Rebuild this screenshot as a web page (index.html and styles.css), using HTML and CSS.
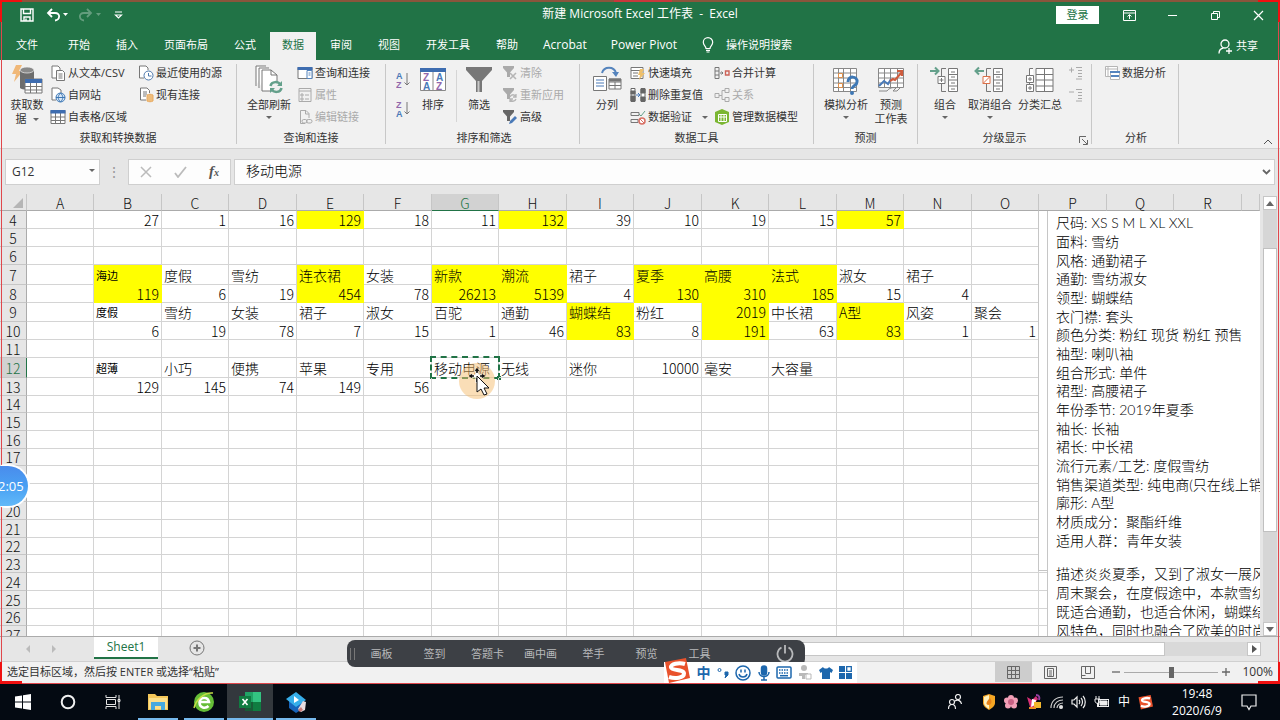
FILE: index.html
```html
<!DOCTYPE html>
<html lang="zh-CN">
<head>
<meta charset="utf-8">
<title>新建 Microsoft Excel 工作表 - Excel</title>
<link rel="stylesheet" href="styles.css">
</head>
<body>
<div class="app">
  <header class="titlebar">
    <div class="quick">
      <button aria-label="保存"><svg width="14" height="14" viewBox="0 0 14 14" fill="none" stroke="#fff" stroke-width="1.4"><path d="M1 1h12v12H1zM3.500 1v4.500h7V1M4 13V9h6v4M6 10.500v2"/></svg></button>
      <button aria-label="撤消"><svg width="24" height="14" viewBox="0 0 24 14" fill="none" stroke="#fff" stroke-width="1.800"><path d="M6 1L2 5l4 4M2 5h7c6 0 5 7 0 7.500"/><path d="M17 5h5l-2.500 3z" fill="#fff" stroke="none"/></svg></button>
      <button aria-label="恢复" class="faded"><svg width="24" height="14" viewBox="0 0 24 14" fill="none" stroke="#fff" stroke-width="1.800"><path d="M9 1l4 4-4 4M13 5H6C0 5 1 12 6 12.500"/><path d="M18 5h5l-2.500 3z" fill="#fff" stroke="none"/></svg></button>
      <button aria-label="自定义快速访问工具栏"><svg width="9" height="10" viewBox="0 0 9 10" fill="none" stroke="#fff" stroke-width="1.200"><path d="M1 2h7M1.500 5l3 3 3-3z"/></svg></button>
    </div>
    <div class="doc-title">新建 Microsoft Excel 工作表&nbsp; -&nbsp; Excel</div>
    <div class="window-tools">
      <button class="login">登录</button>
      <button aria-label="功能区显示选项"><svg width="13" height="11" viewBox="0 0 13 11" fill="none" stroke="#fff"><path d="M.5.500h12v10H.500zM.500 3h12M6.500 9V5M4.500 6.500l2-2 2 2"/></svg></button>
      <button aria-label="最小化"><svg width="11" height="11" viewBox="0 0 11 11" stroke="#fff"><path d="M1 5.500h9"/></svg></button>
      <button aria-label="还原"><svg width="11" height="11" viewBox="0 0 11 11" fill="none" stroke="#fff"><path d="M1.500 3.500h6v6h-6zM3.500 3.500v-2h6v6h-2"/></svg></button>
      <button aria-label="关闭"><svg width="11" height="11" viewBox="0 0 11 11" stroke="#fff" stroke-width="1.200"><path d="M1 1l9 9M10 1l-9 9"/></svg></button>
    </div>
  </header>

  <nav class="tabs">
    <button class="file">文件</button><button>开始</button><button>插入</button><button>页面布局</button><button>公式</button><button class="active">数据</button><button>审阅</button><button>视图</button><button>开发工具</button><button>帮助</button><button class="latin">Acrobat</button><button class="latin">Power Pivot</button>
    <button class="tell"><svg width="12" height="16" viewBox="0 0 12 16" fill="none" stroke="#fff" stroke-width="1.200"><path d="M4 11.500C4 9 1.300 8.500 1.300 5.300a4.700 4.700 0 019.400 0C10.700 8.500 8 9 8 11.500zM4 13.300h4M4.500 15h3"/></svg>操作说明搜索</button>
    <button class="share"><svg width="14" height="15" viewBox="0 0 14 15" fill="none" stroke="#fff" stroke-width="1.300"><circle cx="7" cy="5" r="4"/><path d="M1 14.500c0-3 2-5 4.500-5.500M11 9v6M8 12h6"/></svg>共享</button>
  </nav>

  <section class="ribbon">
    <div class="group g-get">
      <div class="tools">
        <button class="large"><svg width="32" height="32" viewBox="0 0 32 32"><path d="M5 1h6L8 7h4L3 18l2-8H1z" fill="#f0b878"/><path d="M9 6v18c2 2 11 2 14 0V6z" fill="#6d6d6d"/><ellipse cx="16" cy="6" rx="7" ry="3" fill="#8a8a8a" stroke="#f1f1f1" stroke-width=".7"/><path d="M14 15h17v14H14z" fill="#fff" stroke="#777"/><path d="M14 15h17v4H14z" fill="#3e6db0"/><path d="M14 22.500h17M14 26h17M19.500 19v10M25.500 19v10" stroke="#777" fill="none"/></svg><span>获取数<br>据<i class="down"></i></span></button>
        <div class="stack first">
          <button><svg viewBox="0 0 16 16" fill="#fff" stroke="#777"><path d="M10 5V3L8 1H2v12h4M6.500 5.500h6l2 2v8h-8zM8.500 9h4M8.500 11h4M8.500 13h4"/></svg>从文本/CSV</button>
          <button><svg viewBox="0 0 16 16" fill="#fff" stroke="#777"><path d="M11 6V3L8 1H2v12h4"/><circle cx="10.500" cy="10.500" r="4.500" fill="#d9e8f7" stroke="#3e78b5"/><path d="M10.500 6c-3 3-3 6 0 9 3-3 3-6 0-9M6 10.500h9" fill="none" stroke="#3e78b5"/></svg>自网站</button>
          <button><svg viewBox="0 0 16 16" fill="none" stroke="#777"><path d="M1 1.500h14v13H1zM1 8h14M1 11.500h14M5.500 4v10M10.500 4v10" fill="#fff"/><path d="M.500 1h15v3.500H.500z" fill="#3e6db0" stroke="none"/></svg>自表格/区域</button>
        </div>
        <div class="stack">
          <button><svg viewBox="0 0 16 16" fill="#fff" stroke="#777"><path d="M10 5V3L8 1H1.500v12H6"/><circle cx="10.500" cy="10.500" r="4.500" stroke="#4c78ad"/><path d="M10.500 8v3h3" fill="none" stroke="#4c78ad"/></svg>最近使用的源</button>
          <button><svg viewBox="0 0 16 16" fill="#fff" stroke="#777"><path d="M11.500 6V3.500L9 1H2.500v12H8M5 5h4M5 7h4M5 9h3"/><path d="M9 8c2-1 4-1 6 0v6c-2 1-4 1-6 0z" fill="#efbd7c" stroke="#e8ab62"/></svg>现有连接</button>
        </div>
      </div>
      <h2>获取和转换数据</h2>
    </div>
    <div class="group g-query">
      <div class="tools">
        <button class="large w50"><svg width="32" height="32" viewBox="0 0 32 32" fill="#fff" stroke="#777"><path d="M3 22V2h10M6 24V4h10M9 27V6h9l6 5v16z"/><path d="M18 6v5h6" fill="none"/><circle cx="23" cy="23" r="6" fill="#f1f1f1" stroke="none"/><g fill="none" stroke="#64a08b" stroke-width="2.500"><path d="M17.500 22c1-5 8-5 10-1M28.500 24c-1 5-8 5-10 1"/></g><path d="M29 17v5h-5zM17 29v-5h5z" fill="#64a08b" stroke="none"/></svg><span>全部刷新<br><i class="down below"></i></span></button>
        <div class="stack">
          <button><svg viewBox="0 0 16 16" fill="#fff" stroke="#777"><path d="M1 2.500h14v11H1z"/><path d="M.500 2h15v3H.500z" fill="#3e6db0" stroke="none"/><path d="M10 5.500h5v8h-5zM11.500 8h2M11.500 10h2" stroke="#5584bd"/></svg>查询和连接</button>
          <button disabled><svg viewBox="0 0 16 16" fill="none" stroke="#aaa"><path d="M2 1.500h12v13H2zM2 4h12M4 7h2v2H4zM4 11h2v2H4zM8 8h4M8 12h4"/></svg>属性</button>
          <button disabled><svg viewBox="0 0 16 16" fill="none" stroke="#aaa"><path d="M8 14.500H3.500v-13H9l3 3V9M8.500 1.500V5H12"/><rect x="5" y="10.500" width="5" height="3.500" rx="1.700"/><rect x="9.500" y="10.500" width="5.500" height="3.500" rx="1.700"/></svg>编辑链接</button>
        </div>
      </div>
      <h2>查询和连接</h2>
    </div>
    <div class="group g-sort">
      <div class="tools">
        <div class="sorts">
          <button aria-label="升序"><svg width="14" height="18" viewBox="0 0 14 18"><text x="0" y="8" class="az blue">A</text><text x="0" y="17" class="az violet">Z</text><path d="M11 2v12M8.500 11.500L11 14l2.500-2.500" fill="none" stroke="#777"/></svg></button>
          <button aria-label="降序"><svg width="14" height="18" viewBox="0 0 14 18"><text x="0" y="8" class="az violet">Z</text><text x="0" y="17" class="az blue">A</text><path d="M11 2v12M8.500 11.500L11 14l2.500-2.500" fill="none" stroke="#777"/></svg></button>
        </div>
        <button class="large w44"><svg width="32" height="32" viewBox="0 0 32 32"><path d="M3.500 4.500h25v22h-25zM16 5v22" fill="#fff" stroke="#888"/><path d="M3 4h26v4H3z" fill="#3e6db0"/><text x="6" y="17" class="azl violet">Z</text><text x="6" y="26" class="azl blue">A</text><text x="19" y="17" class="azl blue">A</text><text x="19" y="26" class="azl violet">Z</text></svg><span>排序</span></button>
        <i class="rule"></i>
        <button class="large w44"><svg width="32" height="32" viewBox="0 0 32 32"><path d="M3 3h26v3L19 17v11h-6V17L3 6z" fill="#777"/><path d="M15.500 17v11" stroke="#c8c8c8" stroke-width="2"/></svg><span>筛选</span></button>
        <div class="stack">
          <button disabled><svg viewBox="0 0 16 16"><path d="M1 1h11v2L8 7.500V12H5V7.500L1 3z" fill="#aaa"/><path d="M8 8l6 6M14 8l-6 6" stroke="#b5b5b5" stroke-width="1.600"/></svg>清除</button>
          <button disabled><svg viewBox="0 0 16 16"><path d="M1 1h11v2L8 7.500V12H5V7.500L1 3z" fill="#aaa"/><path d="M8 10c1-3 5-3 6 0M14 12c-1 3-5 3-6 0M14 7v3h-3M8 15v-3h3" fill="none" stroke="#b5b5b5" stroke-width="1.300"/></svg>重新应用</button>
          <button><svg viewBox="0 0 16 16"><path d="M1 1h11v2L8 7.500V12H5V7.500L1 3z" fill="#666"/><path d="M7 15l1-3 5-5 2 2-5 5z" fill="#4a7ab8"/></svg>高级</button>
        </div>
      </div>
      <h2>排序和筛选</h2>
    </div>
    <div class="group g-data">
      <div class="tools">
        <button class="large"><svg width="32" height="32" viewBox="0 0 32 32" fill="#fff"><path d="M2.500 12.500h13v14h-13z" stroke="#777"/><path d="M5 16h8M5 19h8M5 22h8" stroke="#4a7ab8"/><path d="M18 15h12v10H18zM18 18h12M24 18v7M18 21.500h12" stroke="#777"/><path d="M18 14.500h12v3H18z" fill="#777"/><path d="M11 9c2-7 12-7 14 0" fill="none" stroke="#5584bd" stroke-width="2"/><path d="M21 8h7l-3 5z" fill="#5584bd"/></svg><span>分列</span></button>
        <div class="stack wide">
          <button><svg viewBox="0 0 16 16" fill="#fff" stroke="#777"><path d="M1 2.500h12v11H1zM1 5.500h12M3 8h5M3 11h5"/><path d="M10 4h4l-2 4h3l-6 7 1-5H8z" fill="#eec06c" stroke="none"/></svg>快速填充</button>
          <button><svg viewBox="0 0 16 16" fill="none" stroke="#666"><path d="M1 1.500h4v13H1zM11 1.500h4v13h-4z" fill="#fff"/><path d="M1 4h4v3H1zM1 9h4v5H1zM11 2h4v4h-4zM11 10h4v4h-4z" fill="#666"/><path d="M6 8h4M8 6l2 2-2 2" stroke="#4a7ab8"/></svg>删除重复值</button>
          <button><svg viewBox="0 0 16 16" fill="none" stroke="#777"><path d="M1 3.500h8v3H1zM1 10.500h7v3H1z"/><path d="M9 5l2 2 4-5" stroke="#64a08b"/><circle cx="12" cy="12" r="3" fill="#fff" stroke="#d87065" stroke-width="1.500"/><path d="M10 10l4 4" stroke="#d87065"/></svg>数据验证<i class="down aside"></i></button>
        </div>
        <div class="stack">
          <button><svg viewBox="0 0 16 16" fill="none" stroke="#777"><path d="M1 2.500h4v11H1zM1 6h4M1 10h4M6 8h3M7.500 6.500L9 8 7.500 9.500"/><path d="M11.500 6h3.500v4h-3.500z" stroke="#cc6257" stroke-width="1.400"/></svg>合并计算</button>
          <button disabled><svg viewBox="0 0 16 16" fill="none" stroke="#aaa"><path d="M1 6.500h4v4H1zM11 1.500h4v4h-4zM11 10.500h4v4h-4zM5 8.500h3v-5h3M8 8.500v4h3"/></svg>关系</button>
          <button><svg viewBox="0 0 16 16"><path d="M1 3l7-3 7 3v10l-7 3-7-3z" fill="#7bb632"/><path d="M4.500 5.500h8v7h-8zM4.500 8h8M7 5.500v7M10 5.500v7" stroke="#fff" fill="none"/></svg>管理数据模型</button>
        </div>
      </div>
      <h2>数据工具</h2>
    </div>
    <div class="group g-forecast">
      <div class="tools">
        <button class="large w50"><svg width="32" height="32" viewBox="0 0 32 32" fill="none" stroke="#888"><path d="M3.500 4.500h23v23h-23zM3.500 9h23M3.500 14h23M3.500 19h23M3.500 23.500h23M8.500 5v22M13.500 5v22M20.500 5v22" fill="#fff"/><path d="M8.500 9.500h4v4h-4zM8.500 19.500h4v4h-4z" stroke="#e0914a"/><path d="M18 18c0-7 10-6 9 0 0 4-5 3-5 7" stroke="#3e78b5" stroke-width="3"/><circle cx="22" cy="29" r="2" fill="#3e78b5" stroke="none"/></svg><span>模拟分析<br><i class="down below"></i></span></button>
        <button class="large"><svg width="32" height="32" viewBox="0 0 32 32" fill="none" stroke="#888"><path d="M3.500 4.500h25v19h-25zM3.500 9h25M3.500 14h25M3.500 19h25M9.500 5v18M15.500 5v18M22.500 5v18" fill="#fff"/><path d="M4 27h8c2-3 6-4 9-3l-3 3h4l3-3"/><path d="M4 22l5-5 4 3 3-5" stroke="#4a7ab8" stroke-width="2"/><path d="M15 17l3-2 2 1 7-8M22 7h5v5" stroke="#cf5b3d" stroke-width="2.200"/></svg><span>预测<br>工作表</span></button>
      </div>
      <h2>预测</h2>
    </div>
    <div class="group g-outline">
      <div class="tools">
        <button class="large"><svg width="32" height="32" viewBox="0 0 32 32" fill="none" stroke="#777"><path d="M19.500 4.500h9v23h-9zM19.500 10.500h9M19.500 16h9M19.500 22h9M22 8h4M22 13h4M22 19h4M22 25h4" fill="#fff"/><path d="M17 4.500h-4.500v23H17"/><path d="M9 12.500h7v7H9zM10.500 16h4M12.500 14v4" fill="#fff"/><path d="M1 7h8M6 3.500L9.500 7 6 10.500" stroke="#64a08b" stroke-width="2"/></svg><span>组合<br><i class="down below"></i></span></button>
        <button class="large w50"><svg width="32" height="32" viewBox="0 0 32 32" fill="none" stroke="#777"><path d="M19.500 4.500h9v23h-9zM19.500 10.500h9M19.500 16h9M19.500 22h9M22 8h4M22 13h4M22 19h4M22 25h4" fill="#fff"/><path d="M17 4.500h-4.500v23H17"/><path d="M9 12.500h7v7H9zM9 19.500l7-7" fill="#fff" stroke="#dc7049"/><path d="M2 7h8M5 3.500L1.500 7 5 10.500" stroke="#64a08b" stroke-width="2"/></svg><span>取消组合<br><i class="down below"></i></span></button>
        <button class="large w50"><svg width="32" height="32" viewBox="0 0 32 32" fill="none" stroke="#777"><path d="M9 4.500H5.500v22H9M12 4.500h17v23H12zM12 10.500h17M12 16h17M12 22h17M20.500 4.500v23" fill="#fff"/><path d="M2.500 11.500h7v7h-7zM2.500 20.500h7v7h-7zM4 15h4M6 13v4M4 24h4M6 22v4" fill="#fff"/></svg><span>分类汇总</span></button>
        <div class="stack">
          <button disabled aria-label="显示明细数据"><svg viewBox="0 0 16 16" fill="none" stroke="#aaa"><path d="M1 5h5M3.500 2.500v5M8 2.500h6M10 5.500h4M10 8.500h4M10 11.500h4M8 14h6"/></svg></button>
          <button disabled aria-label="隐藏明细数据"><svg viewBox="0 0 16 16" fill="none" stroke="#aaa"><path d="M1 5h5M8 2.500h6M10 5.500h4M10 8.500h4M10 11.500h4M8 14h6"/></svg></button>
        </div>
      </div>
      <h2>分级显示</h2>
      <button class="launcher" aria-label="分级显示设置"><svg width="9" height="9" viewBox="0 0 9 9" fill="none" stroke="#666"><path d="M.500 7V.500H7M3 3l5 5M8.500 4v4.500H4"/></svg></button>
    </div>
    <div class="group g-analysis">
      <div class="tools">
        <div class="stack">
          <button><svg viewBox="0 0 16 16" fill="#fff" stroke="#b5b5b5"><path d="M1.500 1.500h12v10h-12zM1.500 4h12M4 2v9"/><path d="M6.500 6.500h9v8h-9z"/><path d="M6 6h10v2H6zM7 10h8v2H7z" fill="#5584bd" stroke="none"/></svg>数据分析</button>
        </div>
      </div>
      <h2>分析</h2>
    </div>
    <button class="collapse" aria-label="折叠功能区"><svg width="10" height="6" viewBox="0 0 10 6" fill="none" stroke="#555"><path d="M1 5l4-4 4 4"/></svg></button>
  </section>

  <section class="formula">
    <label class="namebox"><input value="G12" aria-label="名称框"><i class="down"></i></label>
    <span class="dots">⋮</span>
    <div class="fx">
      <button aria-label="取消"><svg width="12" height="12" viewBox="0 0 12 12" stroke="#bbb" stroke-width="1.500"><path d="M1 1l10 10M11 1L1 11"/></svg></button>
      <button aria-label="输入"><svg width="13" height="12" viewBox="0 0 13 12" fill="none" stroke="#bbb" stroke-width="1.800"><path d="M1 7l3 4 8-10"/></svg></button>
      <button aria-label="插入函数" class="fn"><em>f<sub>x</sub></em></button>
    </div>
    <label class="entry"><input value="移动电源" aria-label="编辑栏"><svg width="9" height="6" viewBox="0 0 9 6" fill="none" stroke="#666" stroke-width="1.800"><path d="M1 1l3.500 3.500L8 1"/></svg></label>
  </section>

  <main class="sheet">
    <div class="grid-area">
      <table class="grid" id="grid"></table>
      <div class="note-back"></div>
      <article class="note">
        <div class="specs"><p>尺码: XS S M L XL XXL</p><p>面料: 雪纺</p><p>风格: 通勤裙子</p><p>通勤: 雪纺淑女</p><p>领型: 蝴蝶结</p><p>衣门襟: 套头</p><p>颜色分类: 粉红 现货 粉红 预售</p><p>袖型: 喇叭袖</p><p>组合形式: 单件</p><p>裙型: 高腰裙子</p><p>年份季节: 2019年夏季</p><p>袖长: 长袖</p><p>裙长: 中长裙</p><p>流行元素/工艺: 度假雪纺</p><p>销售渠道类型: 纯电商(只在线上销</p><p>廓形: A型</p><p>材质成分：聚酯纤维</p><p>适用人群：青年女装</p></div>
        <div class="story"><p>描述炎炎夏季，又到了淑女一展风</p><p>周末聚会，在度假途中，本款雪纺</p><p>既适合通勤，也适合休闲，蝴蝶结</p><p>风特色，同时也融合了欧美的时尚</p></div>
      </article>
    </div>
    <div class="vscroll">
      <button aria-label="向上滚动"><svg width="8" height="5" viewBox="0 0 8 5" fill="#666"><path d="M0 5l4-5 4 5z"/></svg></button>
      <div class="vtrack"><div class="vthumb"></div></div>
      <button aria-label="向下滚动"><svg width="8" height="5" viewBox="0 0 8 5" fill="#666"><path d="M0 0l4 5 4-5z"/></svg></button>
    </div>
  </main>

  <section class="sheet-tabs">
    <div class="nav"><button aria-label="上一张工作表"><svg width="4" height="8" viewBox="0 0 4 8" fill="#bbb"><path d="M4 0v8L0 4z"/></svg></button><button aria-label="下一张工作表"><svg width="4" height="8" viewBox="0 0 4 8" fill="#bbb"><path d="M0 0v8l4-4z"/></svg></button></div>
    <button class="current">Sheet1</button>
    <button class="add" aria-label="新工作表"><svg width="16" height="16" viewBox="0 0 16 16" fill="none" stroke="#777"><circle cx="8" cy="8" r="7"/><path d="M4.500 8h7M8 4.500v7" stroke-width="2"/></svg></button>
    <div class="hscroll"><div class="hthumb"></div><button aria-label="向右滚动"><svg width="5" height="8" viewBox="0 0 5 8" fill="#555"><path d="M0 0v8l5-4z"/></svg></button></div>
  </section>

  <footer class="status">
    <span class="message">选定目标区域，然后按 ENTER 或选择“粘贴”</span>
    <button class="view on" aria-label="普通"><svg width="13" height="13" viewBox="0 0 13 13" fill="none" stroke="#666"><path d="M.500.500h12v12H.500zM.500 4.500h12M.500 8.500h12M4.500.500v12M8.500.500v12"/></svg></button>
    <button class="view" aria-label="页面布局"><svg width="13" height="13" viewBox="0 0 13 13" fill="none" stroke="#666"><path d="M.500.500h12v12H.500zM3.500 2.500h6v8h-6zM5 5h3M5 7h3M5 9h3"/></svg></button>
    <button class="view" aria-label="分页预览"><svg width="14" height="13" viewBox="0 0 14 13" fill="none" stroke="#666"><path d="M.500.500h13v12H.500zM4.500.500v7h5v-7M.500 9.500h4"/></svg></button>
    <div class="zoom"><button aria-label="缩小"><svg width="8" height="8" viewBox="0 0 8 8" stroke="#666" stroke-width="1.300"><path d="M0 4h8"/></svg></button><input type="range" value="50" aria-label="缩放"><button aria-label="放大"><svg width="8" height="8" viewBox="0 0 8 8" stroke="#666" stroke-width="1.300"><path d="M0 4h8M4 0v8"/></svg></button><span>100%</span></div>
  </footer>

  <div class="recording"><i class="tl"></i><i class="tm"></i><i class="tr"></i><i class="bl"></i><i class="br"></i></div>
  <div class="timer">2:05</div>
  <div class="classbar"><i class="grip"></i><button>画板</button><button>签到</button><button>答题卡</button><button>画中画</button><button>举手</button><button>预览</button><button>工具</button><button class="power" aria-label="退出"><svg width="18" height="18" viewBox="0 0 18 18" fill="none" stroke="#b8b9bb" stroke-width="1.800"><path d="M5.500 2.500a7.500 7.500 0 107 0M9 0v8.500"/></svg></button></div>
  <div class="ime">
    <svg class="sogou" width="26" height="26" viewBox="0 0 26 26"><path d="M1 4l21-4 4 20-21 5z" fill="#e9522c"/><path d="M21 6C15 4 6 6 7 9.500s13 1.500 13 6-9 5.500-15 3.500" fill="none" stroke="#fff" stroke-width="4"/></svg>
    <b>中</b>
    <svg width="12" height="12" viewBox="0 0 12 12" fill="none" stroke="#1d67ad"><circle cx="2.500" cy="3" r="1.500"/><path d="M8 5h3v3l-3 3 1-3H8z" fill="#1d67ad"/></svg>
    <svg width="16" height="16" viewBox="0 0 16 16" fill="none" stroke="#1d67ad" stroke-width="1.500"><circle cx="8" cy="8" r="7"/><path d="M6 4.500v3M10 4.500v3M4 9c1 4 7 4 8 0"/></svg>
    <svg width="12" height="16" viewBox="0 0 12 16" fill="none" stroke="#1d67ad" stroke-width="1.500"><rect x="3.500" y="1" width="5" height="9" rx="2.500" fill="#1d67ad"/><path d="M1 7c0 6 10 6 10 0M6 12v3M3 15h6"/></svg>
    <svg width="16" height="13" viewBox="0 0 16 13" fill="none" stroke="#1d67ad" stroke-width="1.500"><rect x="1" y="1" width="14" height="11" rx="1"/><path d="M3 4h10M3 7h10" stroke-dasharray="1.500 1"/><path d="M4 9.700h8"/></svg>
    <svg width="14" height="15" viewBox="0 0 14 15" fill="#b9b9b9"><circle cx="6" cy="3" r="3"/><path d="M1 8h9v2H7v4H4v-3H1z"/><path d="M8 9h5v5H8z" fill="#fff" stroke="#b9b9b9"/></svg>
    <svg width="14" height="14" viewBox="0 0 14 14" fill="#1d67ad"><path d="M4 1c1 2 5 2 6 0l4 3-1.500 3L11 6v7H3V6L1.500 7 0 4z"/></svg>
    <svg width="13" height="13" viewBox="0 0 13 13" fill="#1d67ad"><path d="M0 0h6v6H0zM0 7h6v6H0zM7 7h6v6H7z"/><path d="M7.700.700h4.600v4.600H7.700z" fill="none" stroke="#1d67ad" stroke-width="1.300"/></svg>
  </div>
</div>

<div class="taskbar">
  <div class="launch">
    <button aria-label="开始"><svg width="16" height="16" viewBox="0 0 16 16" fill="#fff"><path d="M0 2.500l7-1v6H0zM8 1.300L16 0v7.500H8zM0 8.500h7v6l-7-1zM8 8.500h8V16l-8-1.200z"/></svg></button>
    <button aria-label="Cortana"><svg width="16" height="16" viewBox="0 0 16 16" fill="none" stroke="#f0f0f0" stroke-width="2"><circle cx="8" cy="8" r="6.300"/></svg></button>
    <button aria-label="任务视图"><svg width="16" height="16" viewBox="0 0 16 16" fill="none" stroke="#e5e5e5"><path d="M1 1v2.500h10V1M1.500 5.500h9v5h-9zM1 15v-2.500h10V15M14 1v14M13 5.500h2v2h-2z"/></svg></button>
    <button class="open" aria-label="文件资源管理器"><svg width="20" height="18" viewBox="0 0 20 18"><path d="M0 1h7l2 2h11v14H0z" fill="#f4c75a"/><path d="M1 5h18v11H1z" fill="#fbdf8b"/><path d="M3 9h14v8h-4v-4H7v4H3z" fill="#45a9df"/></svg></button>
    <button class="open" aria-label="360浏览器"><svg width="22" height="22" viewBox="0 0 22 22" fill="none"><circle cx="11" cy="11" r="10" fill="#65bd37"/><path d="M15.500 15c-3 3-9 2-9-3.500S15 5 16 11H7" stroke="#fff" stroke-width="2.500"/><path d="M1 17C3 9 11 1 20 2" stroke="#c5dd47" stroke-width="1.500"/></svg></button>
    <button class="open active" aria-label="Excel"><svg width="24" height="20" viewBox="0 0 24 20"><path d="M7 0h16v19H7z" fill="#21a366"/><path d="M15 0h8v10h-8z" fill="#33c481"/><path d="M7 10h8v9H7z" fill="#185c37"/><path d="M15 10h8v9h-8z" fill="#107c41"/><path d="M1 4h12v12H1z" fill="#107c41"/><path d="M4.500 7l5 6M9.500 7l-5 6" stroke="#fff" stroke-width="1.600"/></svg></button>
    <button class="open" aria-label="课堂"><svg width="22" height="22" viewBox="0 0 22 22"><path d="M4 10l7-3 8 4v6l-8 5-7-5z" fill="#1764bb"/><path d="M11 1l10 8-10 7L1 8z" fill="#36aeea"/><path d="M9 5l5 4-5 3z" fill="#fff"/><path d="M13 18l5-8 3 1-1 8-4 2z" fill="#e7dde0"/><path d="M13 19l3-3 2 3-3 2z" fill="#ca7a76"/></svg></button>
  </div>
  <div class="tray">
    <svg width="14" height="16" viewBox="0 0 14 16" fill="none" stroke="#eee" stroke-width="1.200"><circle cx="10" cy="3" r="2.500"/><circle cx="4" cy="8" r="2.500"/><path d="M.500 15c0-6 7-6 7 0M7 7c3-2 6 0 6.500 3"/></svg>
    <svg class="apart" width="14" height="16" viewBox="0 0 14 16"><path d="M7 0l6 2v7c0 3-3 5-6 7-3-2-6-4-6-7V2z" fill="#f5a623"/><path d="M7 1v14c-3-2-5-4-5-6V3z" fill="#fff0bd"/><path d="M8 4c3 4 1 7-2 7-3-1-1-4 2-7" fill="#e88219"/></svg>
    <svg width="14" height="14" viewBox="0 0 14 14" fill="#f2a0b7"><circle cx="7" cy="3" r="3"/><circle cx="11" cy="5.500" r="3"/><circle cx="10" cy="10.500" r="3"/><circle cx="4" cy="10.500" r="3"/><circle cx="3" cy="5.500" r="3"/><circle cx="7" cy="7" r="3" fill="#c96184"/></svg>
    <svg width="16" height="16" viewBox="0 0 16 16"><path d="M1 3l5 3 4-4 2 3-3 4 1 5-6-1z" fill="#d92f77"/><path d="M6 5l4 1-1 5-4 2z" fill="#fff"/><path d="M8 8h7v6H8z" fill="#f2b72e"/><path d="M3 14h7" stroke="#ef8e24" stroke-width="2"/><path d="M10 1c3 0 4 2 3 5" fill="none" stroke="#9540a2" stroke-width="2"/></svg>
    <svg width="13" height="14" viewBox="0 0 13 14" fill="none" stroke="#ccc" stroke-width="1.200"><path d="M1 13C1 6 6 2 13 2M4 13c0-5 4-8 9-8M7 13c0-3 3-5 6-5"/><circle cx="11" cy="12" r="1.500" fill="#eee"/></svg>
    <svg width="15" height="14" viewBox="0 0 15 14" fill="none" stroke="#eee" stroke-width="1.200"><path d="M1 5h2l3-3v10L3 9H1zM8 5c1 1 1 3 0 4M10 3c2 2 2 6 0 8M12 1c3 3 3 9 0 12"/></svg>
    <svg width="16" height="12" viewBox="0 0 16 12" fill="none" stroke="#eee"><rect x="4.500" y="3.500" width="10" height="7"/><path d="M6 5h7v4H6z" fill="#eee"/><path d="M2 0v3M5 0v3M1 3h5v2c0 3-5 3-5 0zM3.500 7v4"/></svg>
    <span>中</span>
    <svg width="15" height="15" viewBox="0 0 26 26"><path d="M1 4l21-4 4 20-21 5z" fill="#e9522c"/><path d="M21 6C15 4 6 6 7 9.500s13 1.500 13 6-9 5.500-15 3.500" fill="none" stroke="#fff" stroke-width="4"/></svg>
    <time>19:48<br>2020/6/9</time>
    <svg class="notice" width="16" height="17" viewBox="0 0 16 17" fill="none" stroke="#eee" stroke-width="1.200"><path d="M1 1h14v11h-5l-2 3.500L6 12H1z"/></svg>
  </div>
</div>
<script src="grid.js"></script>
</body>
</html>
```

FILE: styles.css
```css
* { box-sizing: border-box; }
body {
  margin: 0;
  height: 100vh;
  display: flex;
  flex-direction: column;
  overflow: hidden;
  font: 11px/14px "Open Sans", "Noto Sans CJK SC", sans-serif;
  color: #333;
}
button {
  border: 0;
  padding: 0;
  background: none;
  font: inherit;
  color: inherit;
  display: flex;
  align-items: center;
  justify-content: center;
  white-space: nowrap;
}
input { border: 0; padding: 0; background: none; font: inherit; color: inherit; min-width: 0; }
svg { flex: none; display: block; }
p, h2 { margin: 0; font: inherit; }
.down { display: inline-block; border: 3px solid transparent; border-top-color: #666; border-bottom: 0; margin: 0 0 2px 6px; }

.app { position: relative; flex: 1; min-height: 0; display: flex; flex-direction: column; background: #e6e6e6; overflow: hidden; }

.titlebar { height: 30px; display: grid; grid-template-columns: 1fr auto 1fr; align-items: center; background: #217346; color: #fff; flex: none; }
.doc-title { font-size: 12px; padding-bottom: 2px; }
.quick { display: flex; gap: 12px; padding-left: 20px; }
.quick .faded { opacity: .3; margin-left: -4px; }
.window-tools { display: flex; justify-content: flex-end; gap: 8px; padding-right: 4px; }
.window-tools button { width: 35px; height: 18px; }
.window-tools .login { width: 43px; background: #fff; color: #217346; margin-right: 5px; }

.tabs { height: 30px; flex: none; display: flex; gap: 2px; padding: 2px 20px 0 4px; background: #217346; color: #fff; }
.tabs button { padding: 0 12px 2px; }
.tabs .file { margin-right: 4px; }
.tabs .latin { font-size: 12px; padding: 0 11px 2px; }
.tabs .active { background: #f1f1f1; color: #217346; }
.tabs .tell { gap: 12px; }
.tabs .share { margin-left: auto; padding: 0 2px; gap: 4px; }

.ribbon { height: 89px; flex: none; display: flex; background: #f1f1f1; border-bottom: 1px solid #d2d2d2; position: relative; }
.group { position: relative; display: flex; flex-direction: column; padding-left: 7px; flex: none; }
.group::after { content: ""; position: absolute; right: 0; top: 4px; bottom: 4px; width: 1px; background: #c8c8c8; }
.g-get { width: 237px; }
.g-query { width: 149px; }
.g-sort { width: 194px; padding-left: 10px; }
.g-data { width: 234px; }
.g-forecast { width: 104px; }
.g-outline { width: 174px; }
.g-analysis { width: 87px; padding-left: 9px; }
.tools { display: flex; height: 68px; padding-top: 2px; }
.group h2 { text-align: center; line-height: 20px; padding-right: 8px; }
.large { width: 40px; flex-direction: column; justify-content: flex-start; }
.large svg { margin: 2px 0; }
.w50 { width: 50px; }
.w44 { width: 44px; }
.large span { line-height: 14px; }
.below { margin: 4px 0 0; vertical-align: top; }
.stack { display: flex; flex-direction: column; padding-left: 2px; }
.g-sort .stack, .first + .stack, .wide + .stack { padding-left: 0; }
.stack button { height: 22px; padding: 0 1px; gap: 2px; justify-content: flex-start; }
.stack svg { width: 16px; height: 16px; }
.stack button:disabled { color: #aaa; }
.first { width: 90px; }
.wide { width: 86px; }
.stack .aside { margin: 0 0 0 8px; }
.sorts { display: flex; flex-direction: column; gap: 11px; padding: 9px 1px 0 0; }
.rule { width: 1px; height: 52px; margin: 8px 0 0 1px; background: #d5d5d5; }
.az { font: bold 9px "Liberation Sans", sans-serif; }
.azl { font: bold 10px "Liberation Sans", sans-serif; }
.blue { fill: #4a7ab8; }
.violet { fill: #9267ab; }
.launcher { position: absolute; right: 4px; bottom: 3px; }
.collapse { margin: auto 7px 3px auto; }

.formula { flex: none; height: 45px; display: flex; align-items: center; padding: 0 5px; }
.namebox, .fx, .entry { height: 26px; display: flex; align-items: center; background: #fdfdfd; border: 1px solid #cfcfcf; }
.namebox { width: 95px; padding: 0 4px 0 6px; font-size: 12px; }
.namebox input { flex: 1; }
.dots { width: 28px; text-align: center; font-size: 14px; color: #999; }
.fx { width: 103px; justify-content: space-around; }
.fn { font: bold 15px "Liberation Serif", serif; color: #555; }
.fn sub { font-size: 10px; vertical-align: baseline; }
.entry { flex: 1; margin-left: 3px; padding: 0 3px 0 11px; font: 300 14px "Noto Sans CJK SC", sans-serif; color: #000; }
.entry input { flex: 1; height: 20px; margin-bottom: 3px; }

.sheet { flex: 1; min-height: 0; display: flex; gap: 3px; padding-right: 3px; border-bottom: 1px solid #ababab; }
.grid-area { flex: 1; min-width: 0; position: relative; overflow: hidden; background: #fff; }
.grid { table-layout: fixed; width: 100%; min-width: 1242px; border-collapse: separate; border-spacing: 0; font: 300 14px/16px "Noto Sans CJK SC", sans-serif; color: #000; }
.grid th { padding: 0; font-weight: 300; background: #e6e6e6; border-right: 1px solid #c6c6c6; border-bottom: 1px solid #c6c6c6; color: #111; }
.grid thead th { border-bottom-color: #ababab; }
.grid tbody th { border-right-color: #ababab; }
.grid td { position: relative; padding: 0 2px; border-right: 1px solid #d4d4d4; border-bottom: 1px solid #d4d4d4; white-space: nowrap; }
.grid .head { width: 27px; }
.grid .odd { width: 67px; }
.grid .even { width: 68px; }
.grid .rest { width: auto; }
.grid thead tr { height: 17px; }
.grid thead th { padding-top: 2px; line-height: 14px; }
.grid .r17 { height: 17px; line-height: 15px; }
.grid .r18 { height: 18px; }
.grid .r19 { height: 19px; }
.grid .r20 { height: 20px; }
.grid .num { text-align: right; }
.grid .fill { background: #ff0; border-color: #ff0; }
.grid .small { font-size: 11px; font-weight: 400; }
.grid .picked { background: #d2d2d2; color: #217346; }
.grid thead .picked { border-bottom-color: #217346; }
.grid tbody .picked { border-right-color: #217346; }
.corner { display: block; margin: 0 3px 0 auto; border: 5px solid transparent; border-right-color: #b5b5b5; border-bottom-color: #b5b5b5; width: 0; }
.ants { position: absolute; inset: -2px; border: 2px dashed #217346; }
.ants::after { content: ""; position: absolute; right: -3px; bottom: -3px; width: 4px; height: 4px; background: #217346; }
.halo { position: absolute; z-index: 2; left: 27px; top: 5px; width: 36px; height: 36px; border-radius: 50%; background: rgba(246, 190, 112, .5); }
.pointer { position: absolute; z-index: 3; left: 37px; top: 10px; }

.note-back { position: absolute; left: 1038px; right: 0; top: 17px; height: 360px; background: #fff; border: 1px solid #c6c6c6; border-top: 0; }
.note { position: absolute; left: 1047px; right: 0; top: 17px; bottom: 0; overflow: hidden; background: #fff; border-left: 1px solid #c6c6c6; padding: 3px 0 0 8px; font: 300 14px "Open Sans", "Noto Sans CJK SC", sans-serif; font-family: Lato, "Noto Sans CJK SC", sans-serif; color: #000; white-space: nowrap; }
.specs, .story { display: grid; grid-auto-rows: 1fr; align-items: center; line-height: 18px; }
.specs { height: 336px; }
.story { height: 75px; margin-top: 15px; }

.vscroll { width: 14px; flex: none; display: flex; flex-direction: column; padding-top: 2px; }
.vscroll button { height: 14px; background: #fff; border: 1px solid #c6c6c6; }
.vtrack { flex: 1; background: #d6d6d6; display: flex; flex-direction: column; }
.vthumb { margin-top: 38px; flex: 0 0 69%; background: #fff; border: 1px solid #c0c0c0; }

.sheet-tabs { height: 25px; flex: none; display: flex; align-items: flex-start; border-bottom: 1px solid #d0d0d0; padding-right: 19px; }
.nav { width: 94px; height: 24px; display: flex; gap: 22px; padding-left: 26px; }
.current { width: 64px; height: 22px; background: #fff; border-bottom: 2px solid #217346; color: #217346; font-size: 12px; }
.add { margin: 3px 0 0 31px; }
.hscroll { margin-left: auto; margin-top: 5px; width: 38%; height: 14px; display: flex; background: #d9d9d9; }
.hthumb { width: 80%; background: #fff; border: 1px solid #c6c6c6; }
.hscroll button { margin-left: auto; width: 14px; background: #fff; border: 1px solid #c6c6c6; }

.status { height: 22px; flex: none; display: flex; align-items: center; background: #f1f1f1; padding: 0 7px 2px; }
.message { margin-right: auto; }
.view { width: 37px; height: 20px; }
.view.on { background: #cdcdcd; }
.zoom { display: flex; align-items: center; gap: 4px; padding-left: 6px; }
.zoom input { appearance: none; width: 94px; height: 12px; margin: 0; background: linear-gradient(#aaa, #aaa) center / 100% 1px no-repeat; }
.zoom input::-webkit-slider-thumb { appearance: none; width: 5px; height: 11px; background: #666; }
.zoom span { margin-left: 8px; font-size: 12px; }

.recording { position: absolute; inset: 0 1px 0 1px; border: 1px solid #e0474c; border-top: 2px solid #8a553c; pointer-events: none; }
.recording i { position: absolute; }
.tl { left: -2px; top: -2px; width: 22px; height: 22px; border-left: 2px solid #f01010; border-top: 2px solid #f01010; }
.tr { right: -2px; top: -2px; width: 22px; height: 22px; border-right: 2px solid #f01010; border-top: 2px solid #f01010; }
.tm { left: 48%; top: -2px; width: 58px; height: 2px; background: #c8383c; }
.bl { left: -2px; bottom: -1px; width: 22px; height: 22px; border-left: 2px solid #f01010; border-bottom: 3px solid #f01010; }
.br { right: -2px; bottom: -1px; width: 22px; height: 22px; border-right: 2px solid #f01010; border-bottom: 3px solid #f01010; }

.timer { position: absolute; left: 0; top: 464px; width: 30px; height: 44px; border: 2px solid #fff; border-left: 0; border-radius: 8px 22px 22px 8px / 2px 22px 22px 2px; background: linear-gradient(#4a8cec, #49a0f3 50%, #62b9f8); color: #fff; font-size: 13px; line-height: 40px; text-indent: -2px; white-space: nowrap; }

.classbar { position: absolute; left: 347px; bottom: 17px; width: 458px; height: 27px; border-radius: 8px; background: #3d4045; color: #b8b9bb; display: flex; align-items: center; }
.classbar button { width: 53px; }
.classbar .power { width: auto; margin: 0 11px 0 auto; }
.grip { width: 5px; height: 12px; margin-left: 3px; border: 1px solid #777; border-width: 0 1px; }
.ime { position: absolute; left: 664px; bottom: 1px; width: 193px; height: 21px; background: #fff; display: flex; align-items: center; justify-content: space-between; padding: 0 5px 0 0; color: #1d67ad; font-size: 14px; }
.sogou { margin-top: -4px; }

.taskbar { height: 36px; flex: none; display: flex; justify-content: space-between; background: #040a12; color: #fff; }
.launch { display: flex; }
.launch button { width: 45px; }
.launch .open { width: 46px; border-bottom: 2px solid #76b9ed; border-image: linear-gradient(90deg, transparent 10%, #76b9ed 10% 90%, transparent 90%) 2; padding-top: 2px; }
.launch .active { background: #33383d; border-image: none; }
.tray { display: flex; align-items: center; gap: 8px; font-size: 12px; padding-right: 23px; }
.tray .apart { margin-left: 12px; }
.tray time { width: 64px; margin-left: 4px; text-align: center; line-height: 17px; font-size: 12px; }
.tray .notice { margin-left: 4px; }
```

FILE: grid.js
```js
const letters = "ABCDEFGHIJKLMNOPQR";

// A leading "*" marks a highlighted cell.
const data = {
  4: ["", 27, 1, 16, "*129", 18, 11, "*132", 39, 10, 19, 15, "*57"],
  7: ["", "*海边", "度假", "雪纺", "*连衣裙", "女装", "*新款", "*潮流", "裙子", "*夏季", "*高腰", "*法式", "淑女", "裙子"],
  8: ["", "*119", 6, 19, "*454", 78, "*26213", "*5139", 4, "*130", "*310", "*185", 15, 4],
  9: ["", "度假", "雪纺", "女装", "裙子", "淑女", "百驼", "通勤", "*蝴蝶结", "粉红", "*2019", "中长裙", "*A型", "风姿", "聚会"],
  10: ["", 6, 19, 78, 7, 15, 1, 46, "*83", 8, "*191", 63, "*83", 1, 1],
  12: ["", "超薄", "小巧", "便携", "苹果", "专用", "移动电源", "无线", "迷你", 10000, "毫安", "大容量"],
  13: ["", 129, 145, 74, 149, 56]
};
const heights = { 7: 20, 9: 19, 12: 20, 14: 17, 17: 17, 22: 17, 26: 17 };

const marker = '<span class="ants"></span><span class="halo"></span>' +
  '<svg class="pointer" width="22" height="28" viewBox="0 0 22 28"><path d="M8 1v14M1 8h14" stroke="#fff" stroke-width="3"/>' +
  '<path d="M8 1v4M8 10v4M1 8h4M11 8h4M6.500 3L8 1l1.500 2M3 6.500L1 8l2 1.500M13 6.500L15 8l-2 1.500" stroke="#111" fill="none" stroke-width="1.500"/>' +
  '<path d="M8 8v16l4-3 3 6 3-1-3-6h5z" fill="#fff" stroke="#111"/></svg>';

let html = '<colgroup><col class="head">';
for (let i = 0; i < 18; i++) html += `<col class="${i % 2 ? "even" : "odd"}">`;
html += '<col class="rest"></colgroup><thead><tr><th><i class="corner"></i></th>';
for (const c of letters) html += `<th${c === "G" ? ' class="picked"' : ""}>${c}</th>`;
html += "<th></th></tr></thead><tbody>";

for (let row = 4; row <= 27; row++) {
  html += `<tr class="r${heights[row] || 18}"><th${row === 12 ? ' class="picked"' : ""}>${row}</th>`;
  for (let i = 0; i < 19; i++) {
    let text = String((data[row] || [])[i] ?? "");
    const classes = [];
    if (text[0] === "*") { classes.push("fill"); text = text.slice(1); }
    if (/^\d+$/.test(text)) classes.push("num");
    else if (i === 1 && text) classes.push("small");
    const extra = row === 12 && i === 6 ? marker : "";
    html += `<td class="${classes.join(" ")}">${text}${extra}</td>`;
  }
  html += "</tr>";
}
document.getElementById("grid").innerHTML = html + "</tbody>";
```
